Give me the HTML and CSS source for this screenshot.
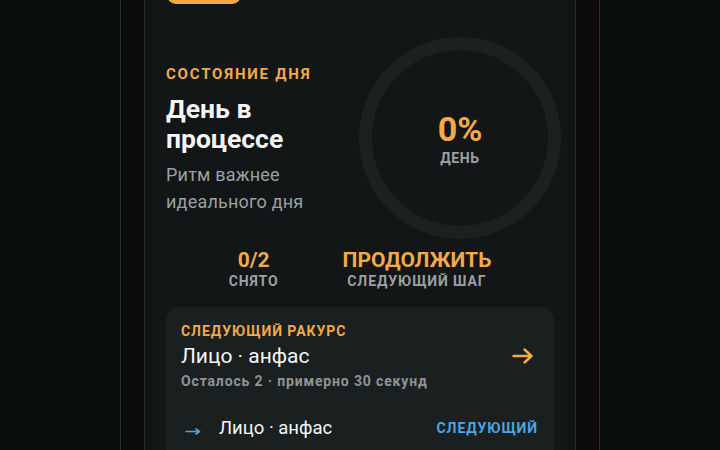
FILE: index.html
```html
<!DOCTYPE html>
<html lang="ru">
<head>
<meta charset="utf-8">
<title>Состояние дня</title>
<link rel="stylesheet" href="styles.css">
</head>
<body>
<div class="phone">
  <div class="card">
    <div class="top-btn"></div>
    <div class="hero">
      <div class="hero-text">
        <div class="label">СОСТОЯНИЕ ДНЯ</div>
        <div class="title">День в<br>процессе</div>
        <div class="subtitle">Ритм важнее<br>идеального дня</div>
      </div>
      <div class="ring">
        <div class="ring-value">0%</div>
        <div class="ring-label">ДЕНЬ</div>
      </div>
    </div>
    <div class="stats">
      <div class="stat">
        <div class="stat-value">0/2</div>
        <div class="stat-label">СНЯТО</div>
      </div>
      <div class="stat">
        <div class="stat-value">ПРОДОЛЖИТЬ</div>
        <div class="stat-label">СЛЕДУЮЩИЙ ШАГ</div>
      </div>
    </div>
    <div class="next">
      <div class="next-label">СЛЕДУЮЩИЙ РАКУРС</div>
      <div class="next-main">
        <div class="next-title">Лицо · анфас</div>
        <svg class="next-arrow" width="22" height="16" viewBox="0 0 22 16" aria-hidden="true">
          <path d="M1.5 8 H19.5 M12.5 1.5 L19.5 8 L12.5 14.5" fill="none" stroke="#f5a947" stroke-width="2.4" stroke-linecap="round" stroke-linejoin="round"/>
        </svg>
      </div>
      <div class="next-meta">Осталось 2 · примерно 30 секунд</div>
      <div class="queue-row">
        <svg class="queue-arrow" width="16" height="8" viewBox="0 0 16 8" aria-hidden="true">
          <path d="M1 4.5 H14 M11 2 L14.5 4.5 L11 7" fill="none" stroke="#4da6e0" stroke-width="1.6" stroke-linecap="round" stroke-linejoin="round"/>
        </svg>
        <div class="queue-title">Лицо · анфас</div>
        <div class="queue-tag">СЛЕДУЮЩИЙ</div>
      </div>
    </div>
  </div>
</div>
</body>
</html>
```

FILE: styles.css
```css
* { box-sizing: border-box; }
html, body { margin: 0; padding: 0; }
body {
  background: #0a0d0d;
  font-family: Roboto, "Noto Sans", "DejaVu Sans", sans-serif;
  height: 450px;
  overflow: hidden;
}
.phone {
  width: 480px;
  height: 450px;
  margin: 0 auto;
  background: #0b0b0d;
  border-left: 1px solid #2a2f2f;
  border-right: 1px solid #2a2f2f;
  padding: 0 23px;
  overflow: hidden;
}
.card {
  margin-top: -40px;
  height: 520px;
  background: #121617;
  border-left: 1px solid #242a2a;
  border-right: 1px solid #242a2a;
  padding: 0 21px;
}
.top-btn {
  width: 74px;
  height: 44px;
  margin-left: 1px;
  background: #f5a947;
  border-radius: 9px;
}
.hero {
  display: flex;
  align-items: center;
  justify-content: space-between;
  margin-top: 33px;
  margin-right: -7px;
}
.hero-text { padding-top: 4px; }
.label {
  color: #f5a947;
  font-weight: 700;
  font-size: 15px;
  letter-spacing: 1.8px;
  line-height: 18px;
}
.title {
  color: #f4f6f6;
  font-weight: 700;
  font-size: 26.5px;
  line-height: 30px;
  margin-top: 11px;
}
.subtitle {
  color: #9ca1a1;
  font-size: 18px;
  letter-spacing: 0.2px;
  line-height: 27px;
  margin-top: 7px;
}
.ring {
  width: 202px;
  height: 202px;
  border-radius: 50%;
  border: 13px solid #1b2021;
  display: flex;
  flex-direction: column;
  align-items: center;
  justify-content: center;
}
.ring-value {
  color: #f5a947;
  font-weight: 700;
  font-size: 34px;
  line-height: 38px;
}
.ring-label {
  color: #9ca1a1;
  font-weight: 700;
  font-size: 14px;
  letter-spacing: 0.6px;
  line-height: 18px;
  margin-top: 1px;
}
.stats {
  display: flex;
  justify-content: center;
  gap: 64px;
  margin-top: 9px;
}
.stat {
  display: flex;
  flex-direction: column;
  align-items: center;
}
.stat-value {
  color: #f5a947;
  font-weight: 700;
  font-size: 21px;
  line-height: 24px;
}
.stat-label {
  color: #9ca1a1;
  font-weight: 700;
  font-size: 14px;
  letter-spacing: 0.9px;
  line-height: 18px;
}
.next {
  margin-top: 17px;
  background: #1a1f20;
  border-radius: 13px;
  padding: 15px 16px 20px 15px;
}
.next-label {
  color: #f5a947;
  font-weight: 700;
  font-size: 14px;
  letter-spacing: 0.95px;
  line-height: 18px;
}
.next-main {
  display: flex;
  align-items: center;
  justify-content: space-between;
  margin-top: 3px;
}
.next-title {
  color: #f4f6f6;
  font-size: 21px;
  line-height: 26px;
}
.next-arrow { margin-right: 4px; }
.next-meta {
  color: #8f9595;
  font-weight: 700;
  font-size: 14px;
  letter-spacing: 0.85px;
  line-height: 18px;
  margin-top: 3px;
}
.queue-row {
  display: flex;
  align-items: center;
  margin-top: 26px;
}
.queue-arrow { margin-left: 4px; margin-top: 6px; }
.queue-title {
  color: #f4f6f6;
  font-size: 18.5px;
  line-height: 24px;
  margin-left: 18px;
  flex: 1;
}
.queue-tag {
  color: #4da6e0;
  font-weight: 700;
  font-size: 14px;
  letter-spacing: 0.9px;
  line-height: 18px;
}
```
